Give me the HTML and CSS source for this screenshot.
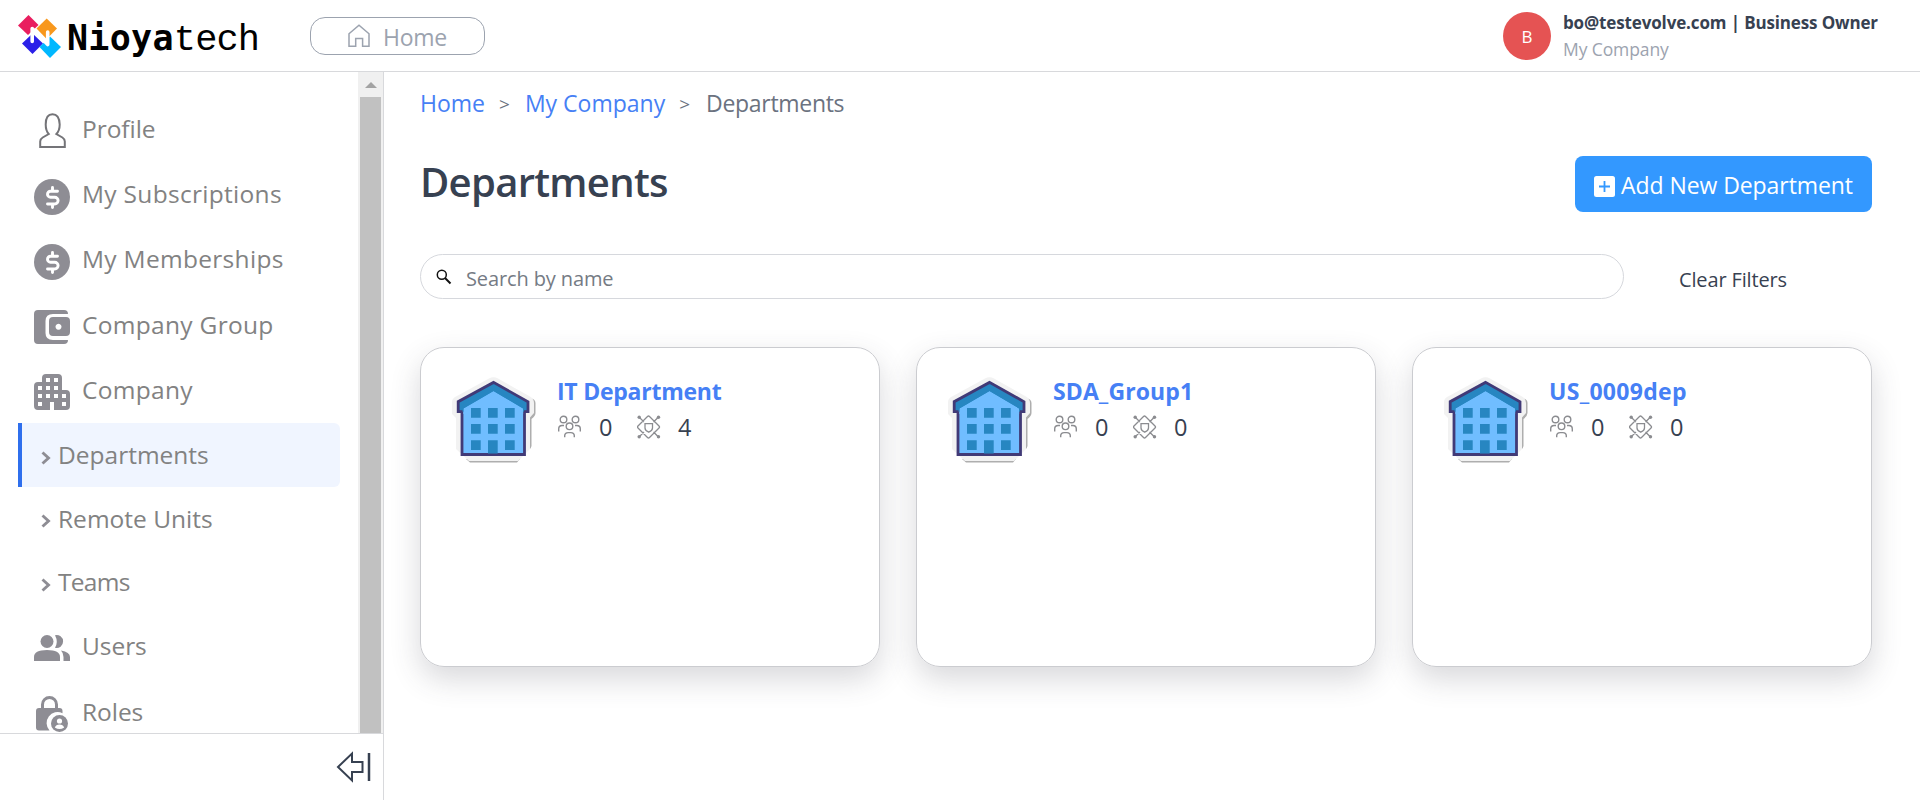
FILE: index.html
```html
<!DOCTYPE html>
<html lang="en">
<head>
<meta charset="utf-8">
<title>Departments</title>
<link rel="stylesheet" href="styles.css">
</head>
<body>
<svg class="defs" width="0" height="0" aria-hidden="true">
  <symbol id="coin" viewBox="0 0 36 36"><circle cx="18" cy="18" r="18" fill="#8e8d94"/><path d="M23.500 12.200h-7a3 3 0 0 0 0 6h4.200a3.300 3.300 0 0 1 0 6.800H13.500M18.500 8.500v3.500M18.500 25.500v3" fill="none" stroke="#fff" stroke-width="2.900" stroke-linecap="round"/></symbol>
  <symbol id="chev" viewBox="0 0 10 14"><path d="M1.500 1.500L7.500 7L1.500 12.500" fill="none" stroke="#8e8d94" stroke-width="2.900"/></symbol>
  <symbol id="building" viewBox="0 0 86 88">
    <path d="M78 22Q83.500 23 83.500 27V37Q83.500 40 79.500 43V70Q79 72 78 73ZM14 83H68L65 86.500H18Z" fill="#aeaeae"/>
    <path d="M37 2.500Q41.500 0 46 2.500L78 20.500Q82 23 82 27V37L78 41.500V73L66 85H17L4 73V42L0 38V26Q0 22.500 4 20.500Z" fill="#f2f2f2"/>
    <path d="M10 35V78.500H72.500V35L41.500 14Z" fill="#70bdff" stroke="#413a77" stroke-width="2.800"/>
    <path d="M41.500 6.500L76 26V35.500H71.500L41.500 17L11.500 35.500H6.500V26Z" fill="#2786c1"/>
    <path d="M11.400 32.500L41.500 15L71.100 32.500V38H11.400Z" fill="#70bdff"/>
    <path d="M11.400 28H6.400V35.500H11.400V32.500L41.500 15L71.100 32.500V35.500H76V28L41.500 7.500Z" fill="#2786c1"/>
    <path d="M10.500 35.700H6.200V25.700L41.500 6.400L76 25.700V35.700H72" fill="none" stroke="#413a77" stroke-width="2.800"/>
    <path d="M19 32h9.700v9.700h-9.700zM36 32h9.700v9.700h-9.700zM53 32h9.700v9.700h-9.700zM19 48h9.700v9.700h-9.700zM36 48h9.700v9.700h-9.700zM53 48h9.700v9.700h-9.700zM19 64.200h9.700v9.700h-9.700zM36 64.200h9.700v13.200h-9.700zM53 64.200h9.700v9.700h-9.700z" fill="#2786c1"/>
  </symbol>
  <symbol id="people" viewBox="0 0 24 24"><g fill="none" stroke="#8b8c90" stroke-width="1.400"><circle cx="5.500" cy="4.500" r="3.300"/><circle cx="17.500" cy="4.500" r="3.300"/><circle cx="11.500" cy="11.300" r="3.300"/><path d="M.7 16.500v-2.500q0-3.500 3.500-3.500H6M22.300 16.500v-2.500q0-3.500-3.500-3.500H17M6.700 22.300v-1.500q0-3.200 3.500-3.200h2.600q3.500 0 3.500 3.200v1.500"/></g></symbol>
  <symbol id="asset" viewBox="0 0 24 24"><g fill="none" stroke="#8b8c90" stroke-width="1.300"><path d="M10.500 1.500Q11.500.5 12.500 1.500L22 11q1 1 0 2L12.500 22.500q-1 1-2 0L1 13q-1-1 0-2ZM8 8.700h7.500V13q0 2.500-3.750 4.200Q8 15.500 8 13ZM2 2l5 5M21.500 2l-5 5M2 22l5-5M21.500 22l-5-5"/></g><g fill="#8b8c90"><circle cx="2.200" cy="2.200" r="1.700"/><circle cx="21.500" cy="2.200" r="1.700"/><circle cx="2.200" cy="21.700" r="1.700"/><circle cx="21.500" cy="21.700" r="1.700"/></g></symbol>
</svg>
<header class="top">
  <div class="logo">
    <svg width="44" height="44" viewBox="0 0 44 44"><path d="M10.500 0L20.500 10L10 20L0 10.500Z" fill="#e91e5f"/><path d="M28.700 3.500L39 13.500L28.700 24L18.500 13.500Z" fill="#f8981d"/><path d="M14.500 18.500L25 28.500L14.500 39L4 28.500Z" fill="#2b20e8"/><path d="M32 21.500L43 32L32 43L21.500 32Z" fill="#00b8ff"/><path d="M14.200 26.500V13.500L29.700 29.500V17" fill="none" stroke="#fff" stroke-width="3.600" stroke-linejoin="round" stroke-linecap="round"/></svg>
    <span class="brand-bold">Nioya</span><span class="brand-thin">tech</span>
  </div>
  <a class="home-pill"><svg width="24" height="24" viewBox="0 0 24 24"><path d="M2 9.800L12 1.200L22 9.800V22.300H15.600V14.600H8.700V22.300H2Z" fill="none" stroke="#9ca3af" stroke-width="1.500"/></svg><span>Home</span></a>
  <div class="account">
    <span class="avatar">B</span>
    <div class="who"><b class="mail">bo@testevolve.com | Business Owner</b><span class="org">My Company</span></div>
  </div>
</header>
<div class="body">
  <aside class="side">
    <div class="scroll">
      <nav class="nav">
        <a class="item short"><svg width="36" height="36" viewBox="0 0 36 36"><path d="M6.200 34V28.500q0-2.500 2.500-4l6-3.500q-3-3.500-3-9.500Q11.700 1.300 18.500 1.300T25.700 11.500q0 6-3.300 9.500l6 3.500Q30.800 26 30.800 28.500v5.500Z" fill="none" stroke="#747478" stroke-width="2"/></svg><span>Profile</span></a>
        <a class="item"><svg class="coin" width="36" height="36"><use href="#coin"/></svg><span>My Subscriptions</span></a>
        <a class="item"><svg class="coin" width="36" height="36"><use href="#coin"/></svg><span>My Memberships</span></a>
        <a class="item"><svg width="36" height="36" viewBox="0 0 36 36"><path d="M4 1H30q4 0 4 4H19q-7.500 0-7.500 7V24q0 7 7.500 7H34q0 4-4 4H4q-4 0-4-4V5Q0 1 4 1Z" fill="#8e8d94"/><path fill-rule="evenodd" d="M19 8H32q4 0 4 4V23q0 4-4 4H19q-4 0-4-4V12q0-4 4-4ZM24.500 14.700a3 3 0 1 0 .01 0Z" fill="#8e8d94"/></svg><span>Company Group</span></a>
        <a class="item"><svg width="36" height="36" viewBox="0 0 36 36"><path fill-rule="evenodd" d="M12 0H24q4 0 4 4V16h4q4 0 4 4V32q0 4-4 4H20V28H16V36H4q-4 0-4-4V12q0-4 4-4H8V4q0-4 4-4ZM12 4v4h4V4ZM20 4v4h4V4ZM4 12v4h4v-4ZM12 12v4h4v-4ZM20 12v4h4v-4ZM4 20v4h4v-4ZM12 20v4h4v-4ZM20 20v4h4v-4ZM28 20v4h4v-4ZM4 28v4h4v-4ZM28 28v4h4v-4Z" fill="#8e8d94"/></svg><span>Company</span></a>
        <a class="sub active"><svg width="10" height="14"><use href="#chev"/></svg><span>Departments</span></a>
        <a class="sub"><svg width="10" height="14"><use href="#chev"/></svg><span>Remote Units</span></a>
        <a class="sub tight"><svg width="10" height="14"><use href="#chev"/></svg><span>Teams</span></a>
        <a class="item short"><svg width="36" height="36" viewBox="0 0 36 36"><g fill="#8e8d94"><circle cx="13" cy="11.500" r="6.500"/><path d="M21 5.200a6.500 6.500 0 1 1 0 12.600q3.500-6 0-12.600ZM0 31V27q0-7 13-7t13 7v4ZM27 20.500q9 1.500 9 6.500v4H29.500V27q0-4-2.500-6.500Z"/></g></svg><span>Users</span></a>
        <a class="item short"><svg width="36" height="36" viewBox="0 0 36 36"><path d="M8.500 13V8.500a7 7 0 0 1 14 0V13" fill="none" stroke="#8e8d94" stroke-width="3"/><path d="M5 12H25.500q3 0 3 3v2.200A11 11 0 0 0 15.500 34.500H5q-3 0-3-3V15Q2 12 5 12Z" fill="#8e8d94"/><circle cx="25.500" cy="27.500" r="8.500" fill="#8e8d94"/><circle cx="25.500" cy="25" r="2.600" fill="#fff"/><path d="M20.800 31.500q1.200-3 4.700-3t4.700 3q-4.700 3-9.400 0Z" fill="#fff"/></svg><span>Roles</span></a>
      </nav>
      <div class="bar"><div class="arrow"></div><div class="thumb"></div></div>
    </div>
    <div class="collapse"><svg width="36" height="32" viewBox="0 0 36 32"><path d="M2 16L16 2.500V11H26.500V21H16V29.500Z" fill="none" stroke="#374151" stroke-width="2"/><path d="M33 2V30" stroke="#374151" stroke-width="2.500"/></svg></div>
  </aside>
  <main class="main">
    <div class="crumbs"><a>Home</a><i>&gt;</i><a>My Company</a><i>&gt;</i><span>Departments</span></div>
    <div class="head"><h1>Departments</h1><button class="add"><svg width="21" height="21" viewBox="0 0 21 21"><rect width="21" height="21" rx="2.500" fill="#fff"/><path d="M10.500 5v11M5 10.500h11" stroke="#3398ff" stroke-width="1.800"/></svg><span>Add New Department</span></button></div>
    <div class="filters"><div class="search"><svg width="16" height="16" viewBox="0 0 16 16"><circle cx="5.800" cy="5.800" r="4.500" fill="none" stroke="#111" stroke-width="1.500"/><path d="M9 9L14.500 14.500" stroke="#111" stroke-width="2"/></svg><span>Search by name</span></div><a class="clear">Clear Filters</a></div>
    <div class="cards">
      <section class="card"><svg width="86" height="88"><use href="#building"/></svg><div class="info"><h2 class="snug">IT Department</h2><div class="stats"><svg width="24" height="24"><use href="#people"/></svg><span>0</span><svg width="24" height="24"><use href="#asset"/></svg><span>4</span></div></div></section>
      <section class="card"><svg width="86" height="88"><use href="#building"/></svg><div class="info"><h2>SDA_Group1</h2><div class="stats"><svg width="24" height="24"><use href="#people"/></svg><span>0</span><svg width="24" height="24"><use href="#asset"/></svg><span>0</span></div></div></section>
      <section class="card"><svg width="86" height="88"><use href="#building"/></svg><div class="info"><h2 class="loose">US_0009dep</h2><div class="stats"><svg width="24" height="24"><use href="#people"/></svg><span>0</span><svg width="24" height="24"><use href="#asset"/></svg><span>0</span></div></div></section>
    </div>
  </main>
</div>
</body>
</html>
```
FILE: styles.css
```css
* { box-sizing: border-box; }
body { margin: 0; height: 800px; overflow: hidden; display: flex; flex-direction: column; background: #fff; font-family: "Open Sans", "Noto Sans", sans-serif; color: #374151; }
svg { display: block; flex: none; }
.defs { display: none; }
.top { height: 72px; flex: none; display: flex; align-items: flex-start; border-bottom: 1px solid #d8d9dc; padding-left: 18px; }
.logo { display: flex; width: 292px; padding-top: 15px; color: #000; }
.brand-bold { font: 700 35px/44px "DejaVu Sans Mono", monospace; margin-left: 5px; padding-top: 1px; letter-spacing: .3px; }
.brand-thin { font: 400 37px/44px "Liberation Mono", monospace; padding-top: 3px; letter-spacing: -.9px; }
.home-pill { display: flex; align-items: center; width: 175px; height: 38px; margin-top: 17px; border: 1px solid #9ca3af; border-radius: 15px; padding-left: 36px; gap: 12px; font-size: 23px; letter-spacing: -.3px; color: #9ca3af; }
.home-pill span { padding-top: 2px; }
.account { display: flex; margin-left: auto; width: 417px; padding-top: 12px; gap: 12px; }
.avatar { width: 48px; height: 48px; border-radius: 50%; background: #e55353; color: #fff; font-size: 17px; line-height: 49px; text-align: center; }
.who { display: flex; flex-direction: column; }
.mail { font-size: 17px; line-height: 22px; letter-spacing: -.14px; }
.org { font-size: 17.500px; line-height: 31px; letter-spacing: -.1px; color: #9ca3af; }
.body { display: flex; flex: 1; min-height: 0; }
.side { width: 384px; border-right: 1px solid #d8d9dc; display: flex; flex-direction: column; }
.scroll { flex: 1; min-height: 0; display: flex; overflow: hidden; }
.nav { flex: 1; padding: 24px 18px 0; }
.item { height: 65.400px; display: flex; align-items: center; padding-left: 16px; gap: 12px; font-size: 24.500px; letter-spacing: .3px; color: #828282; }
.item span { margin-top: -1px; }
.item svg { margin-top: 4px; }
.item .coin { margin-top: 6px; }
.short { letter-spacing: -.05px; }
.sub { height: 63.600px; display: flex; align-items: center; padding-left: 23px; gap: 7px; font-size: 24.500px; color: #828282; }
.sub svg { margin-top: 6px; }
.tight { letter-spacing: -.7px; }
.active { background: #f0f5ff; border-left: 4px solid #2f6fed; padding-left: 19px; border-radius: 0 6px 6px 0; }
.bar { width: 25px; background: #f0f0f0; padding: 10px 2px 0; }
.arrow { width: 0; margin: 0 auto; border: 6px solid transparent; border-top: 0; border-bottom-color: #a3a3a3; }
.thumb { margin-top: 9px; height: 640px; background: #c1c1c1; }
.collapse { height: 67px; flex: none; border-top: 1px solid #d8d9dc; display: flex; justify-content: flex-end; padding: 17px 11px 0 0; }
.main { flex: 1; padding: 11px 48px 0 36px; }
.crumbs { display: flex; align-items: center; height: 40px; font-size: 23px; color: #6b7280; }
.crumbs a { color: #4680f5; }
.crumbs i { font-style: normal; font-size: 19px; margin: 2px 15px 0 14px; }
.crumbs span { margin-left: 1px; letter-spacing: -.3px; }
.head { display: flex; justify-content: space-between; align-items: flex-start; margin-top: 33px; }
h1 { margin: -6px 0 0; font-size: 40px; line-height: 64px; font-weight: 600; letter-spacing: -.7px; }
.add { width: 297px; height: 56px; border: 0; border-radius: 8px; background: #3398ff; color: #fff; font: 23px "Open Sans", sans-serif; letter-spacing: -.07px; display: flex; align-items: center; padding: 4px 0 0 19px; gap: 6px; }
.add span { margin-top: -2px; }
.filters { display: flex; margin-top: 40px; }
.search { width: 1204px; height: 45px; border: 1px solid #d6d8dd; border-radius: 23px; display: flex; align-items: center; padding-left: 15px; gap: 14px; font-size: 20px; letter-spacing: -.12px; color: #757b84; }
.search span { padding-top: 4px; }
.clear { font-size: 20px; line-height: 52px; margin-left: 55px; letter-spacing: -.15px; }
.cards { display: grid; grid-template-columns: repeat(3, 460px); gap: 36px; margin-top: 41px; }
.card { height: 320px; border: 1px solid #cbccd0; border-radius: 24px; box-shadow: 0 12px 30px rgba(60,60,75,.2); display: flex; padding: 28px 0 0 31px; gap: 19px; }
h2 { margin: 0; font-size: 23px; line-height: 31px; letter-spacing: .1px; color: #4680f5; font-weight: 700; }
.snug { letter-spacing: -.25px; }
.loose { letter-spacing: .3px; }
.stats { display: flex; align-items: center; height: 38px; margin-top: 1px; padding-left: 1px; font-size: 23.500px; }
.stats span { width: 38px; margin-left: 17px; }
```
